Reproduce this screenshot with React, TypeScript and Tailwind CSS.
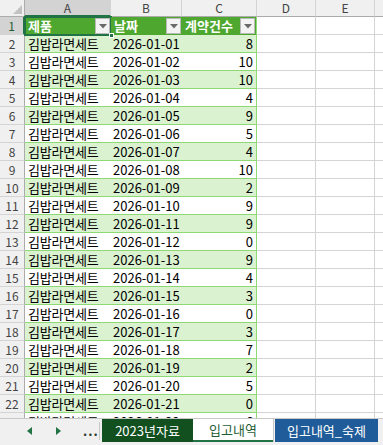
import React from "react";

const rows: [string, number][] = [
  ["2026-01-01", 8],
  ["2026-01-02", 10],
  ["2026-01-03", 10],
  ["2026-01-04", 4],
  ["2026-01-05", 9],
  ["2026-01-06", 5],
  ["2026-01-07", 4],
  ["2026-01-08", 10],
  ["2026-01-09", 2],
  ["2026-01-10", 9],
  ["2026-01-11", 9],
  ["2026-01-12", 0],
  ["2026-01-13", 9],
  ["2026-01-14", 4],
  ["2026-01-15", 3],
  ["2026-01-16", 0],
  ["2026-01-17", 3],
  ["2026-01-18", 7],
  ["2026-01-19", 2],
  ["2026-01-20", 5],
  ["2026-01-21", 0],
  ["2026-01-22", 6],
];

const font = { fontFamily: '"Noto Sans CJK KR", "Noto Sans", sans-serif' };

function Drop() {
  return (
    <div className="absolute right-[1px] top-[1px] w-[15px] h-[16px] bg-[#f3f3f3] border border-[#b9b9b9] flex items-center justify-center">
      <svg width="8" height="5" viewBox="0 0 8 5">
        <path d="M0 0h8L4 4.5z" fill="#6a6a6a" />
      </svg>
    </div>
  );
}

function ColHead({ label, w, active }: { label: string; w: string; active?: boolean }) {
  return (
    <div
      className={`${w} h-[17px] shrink-0 flex items-center justify-center text-[12px] text-[#444] border-r border-[#d4d4d4] border-b ${
        active ? "bg-[#d3d3d3] border-b-2 border-b-[#217346] text-[#1f5e35]" : "bg-[#f0f0f0] border-b-[#ababab]"
      }`}
    >
      {label}
    </div>
  );
}

export default function App() {
  return (
    <div className="w-[383px] h-[445px] overflow-hidden bg-white flex flex-col select-none" style={font}>
      <div className="flex-1 overflow-hidden">
        {/* column headers */}
        <div className="flex">
          <div className="w-[25px] h-[17px] shrink-0 bg-[#f0f0f0] border-r border-b border-[#ababab] flex items-end justify-end pr-[2px] pb-[2px]">
            <svg width="9" height="9" viewBox="0 0 9 9">
              <path d="M9 0v9H0z" fill="#c2c2c2" />
            </svg>
          </div>
          <ColHead label="A" w="w-[86px]" active />
          <ColHead label="B" w="w-[71px]" />
          <ColHead label="C" w="w-[75px]" />
          <ColHead label="D" w="w-[59px]" />
          <ColHead label="E" w="w-[59px]" />
          <ColHead label="" w="w-[20px]" />
        </div>

        {/* header row 1 */}
        <div className="flex h-[18px]">
          <div className="w-[25px] shrink-0 bg-[#d3d3d3] border-r-2 border-[#217346] border-b border-b-[#d4d4d4] flex items-center justify-center text-[12px] text-[#1f5e35]">
            1
          </div>
          <div className="relative w-[86px] shrink-0 bg-[#4ea72e] text-white font-bold text-[13px] pl-[3px] flex items-center">
            제품
            <Drop />
            <div className="absolute inset-[-1px] border-2 border-[#217346] pointer-events-none" />
            <div className="absolute right-[-3px] bottom-[-3px] w-[5px] h-[5px] bg-[#217346] border border-white z-10" />
          </div>
          <div className="relative w-[71px] shrink-0 bg-[#4ea72e] text-white font-bold text-[13px] pl-[3px] flex items-center">
            날짜
            <Drop />
          </div>
          <div className="relative w-[75px] shrink-0 bg-[#4ea72e] text-white font-bold text-[13px] pl-[3px] flex items-center border-r border-[#8ed973]">
            계약건수
            <Drop />
          </div>
          <div className="w-[59px] shrink-0 border-r border-b border-[#d4d4d4]" />
          <div className="w-[59px] shrink-0 border-r border-b border-[#d4d4d4]" />
          <div className="w-[20px] shrink-0 border-b border-[#d4d4d4]" />
        </div>

        {rows.map(([d, n], i) => {
          const band = i % 2 === 0;
          const bg = band ? "bg-[#daf2d0]" : "bg-white";
          return (
            <div key={d} className="flex h-[18px]">
              <div className="w-[25px] shrink-0 bg-[#f0f0f0] border-r border-b border-[#d4d4d4] border-r-[#ababab] flex items-center justify-center text-[12px] text-[#444]">
                {i + 2}
              </div>
              <div className={`w-[86px] shrink-0 ${bg} border-b border-[#8ed973] text-[13px] pl-[3px] flex items-center text-black whitespace-nowrap tracking-[-0.2px]`}>
                김밥라면세트
              </div>
              <div className={`w-[71px] shrink-0 ${bg} border-b border-[#8ed973] text-[13px] pl-[2px] flex items-center text-black whitespace-nowrap`}>
                {d}
              </div>
              <div className={`w-[75px] shrink-0 ${bg} border-b border-r border-[#8ed973] text-[13px] pr-[3px] flex items-center justify-end text-black`}>
                {n}
              </div>
              <div className="w-[59px] shrink-0 border-r border-b border-[#d4d4d4]" />
              <div className="w-[59px] shrink-0 border-r border-b border-[#d4d4d4]" />
              <div className="w-[20px] shrink-0 border-b border-[#d4d4d4]" />
            </div>
          );
        })}
      </div>

      {/* sheet tabs */}
      <div className="h-[27px] shrink-0 bg-[#f0f0f0] border-t border-[#c8c8c8] flex items-stretch pb-[3px] text-[13px]">
        <div className="w-[100px] shrink-0 flex items-center">
          <svg className="ml-[27px]" width="5" height="8" viewBox="0 0 5 8">
            <path d="M5 0v8L0 4z" fill="#217346" />
          </svg>
          <svg className="ml-[24px]" width="5" height="8" viewBox="0 0 5 8">
            <path d="M0 0v8l5-4z" fill="#217346" />
          </svg>
          <span className="ml-[22px] text-[#2b3b30] font-bold tracking-[1px] leading-none">...</span>
          <div className="ml-auto w-px h-[18px] bg-[#c8c8c8]" />
        </div>
        <div className="w-[91px] shrink-0 ml-[2px] bg-[#12501f] text-white flex items-center justify-center">2023년자료</div>
        <div className="w-[80px] shrink-0 bg-white text-[#1f5e35] flex items-center justify-center border-b-2 border-[#217346]">
          입고내역
        </div>
        <div className="w-px bg-[#c8c8c8]" />
        <div className="w-[103px] shrink-0 ml-[1px] bg-[#1f5c99] text-white flex items-center justify-center">입고내역_숙제</div>
      </div>
    </div>
  );
}
